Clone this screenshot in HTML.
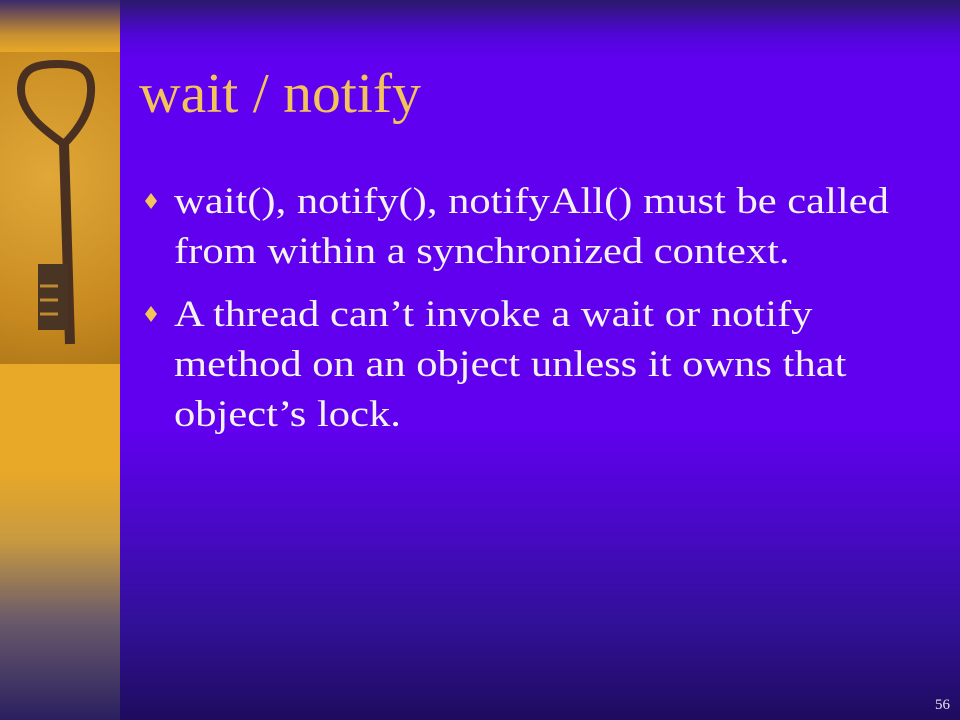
<!DOCTYPE html>
<html><head><style>
body{margin:0;width:960px;height:720px;overflow:hidden;position:relative;font-family:"Liberation Serif",serif;
background:linear-gradient(to bottom,#2a1a6a 0px,#5006d8 35px,#6000f0 60px,#6000ee 430px,#4a08c8 520px,#32109a 620px,#1e0c5e 720px);}
#strip{position:absolute;left:0;top:0;width:120px;height:720px;
background:linear-gradient(to bottom,#3a2a6a 0px,#c89030 35px,#e8a828 52px,#e8a828 470px,#c89a40 540px,#6a5a6a 620px,#2a2060 720px);}
#key{position:absolute;left:0;top:52px;width:120px;height:312px;background:radial-gradient(circle at 40% 40%,#e0a838,#c88a20 70%,#b07818);}
h1{position:absolute;left:139px;top:66px;margin:0;font-weight:normal;font-size:56px;color:#f2c45a;line-height:1;transform:scaleX(1.03);transform-origin:left;}
.b{position:absolute;left:174px;font-size:37px;color:#f4f2f0;line-height:50px;width:760px;transform:scaleX(1.15);transform-origin:left;white-space:nowrap;}
.d{position:absolute;left:145px;width:12px;height:16px;background:#f2c45a;clip-path:polygon(50% 0,100% 50%,50% 100%,0 50%);}
#n{position:absolute;right:10px;bottom:6px;font-size:15px;color:#e8e4f0;}
</style></head><body>
<div id="strip"></div>
<div id="key"><svg width="120" height="312" viewBox="0 0 120 312">
<path d="M64 92 C44 78 20 60 21 36 C22 16 36 12 58 12 C84 12 92 20 91 40 C90 62 76 80 64 92" fill="none" stroke="#4a3020" stroke-width="8"/>
<path d="M64 92 L70 292" stroke="#4a3020" stroke-width="10" fill="none"/>
<rect x="38" y="212" width="30" height="66" fill="#4a3424"/>
<path d="M40 234h18M40 248h18M40 262h18" stroke="#c08a30" stroke-width="3"/>
</svg></div>
<h1>wait / notify</h1>
<div class="d" style="top:193px"></div>
<div class="b" style="top:177px">wait(), notify(), notifyAll() must be called<br>from within a synchronized context.</div>
<div class="d" style="top:306px"></div>
<div class="b" style="top:290px">A thread can’t invoke a wait or notify<br>method on an object unless it owns that<br>object’s lock.</div>
<div id="n">56</div>
</body></html>
